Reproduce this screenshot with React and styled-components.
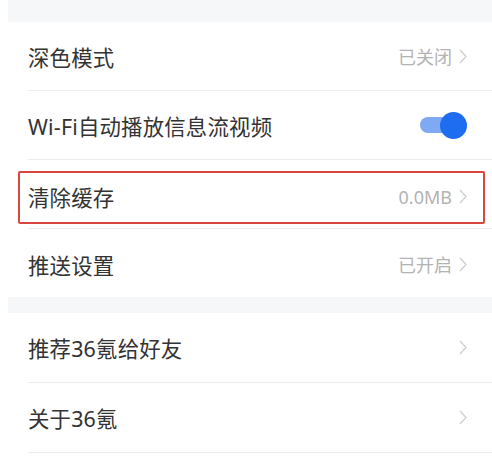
import React from 'react';
import styled, { createGlobalStyle } from 'styled-components';

const GlobalStyle = createGlobalStyle`
  html, body {
    margin: 0;
    padding: 0;
    background: #fff;
  }
  body {
    font-family: "Noto Sans", "Noto Sans CJK SC", sans-serif;
    -webkit-font-smoothing: antialiased;
  }
`;

const Page = styled.div`
  width: 492px;
  height: 456px;
  overflow: hidden;
  background: #fff;
`;

const Gap = styled.div`
  height: ${(p) => p.h}px;
  margin-left: 8px;
  background: #f6f7f8;
`;

const Section = styled.div`
  background: #fff;
`;

const Row = styled.div`
  position: relative;
  display: flex;
  align-items: center;
  justify-content: space-between;
  height: ${(p) => p.h || 68}px;
  margin-left: 28px;
  padding-right: 25px;
  border-bottom: ${(p) => (p.last ? 'none' : '1px solid #ececec')};
`;

const Label = styled.span`
  font-size: 21.4px;
  color: #333;
  letter-spacing: 0.2px;
  margin-top: ${(p) => p.offset || 0}px;
`;

const Right = styled.div`
  display: flex;
  align-items: center;
  gap: 7px;
  margin-top: ${(p) => p.offset || 0}px;
`;

const Value = styled.span`
  font-size: 18px;
  color: #b3b3b3;
`;

const Chevron = () => (
  <svg width="8" height="15" viewBox="0 0 8 15">
    <path d="M1 1 L7 7.5 L1 14" fill="none" stroke="#cfcfcf" strokeWidth="1.3" />
  </svg>
);

const Track = styled.div`
  position: relative;
  width: 40px;
  height: 16px;
  border-radius: 8px;
  background: #80a9f4;
  margin-right: 7px;
`;

const Knob = styled.div`
  position: absolute;
  right: -7px;
  top: 50%;
  width: 27px;
  height: 27px;
  margin-top: -13.5px;
  border-radius: 50%;
  background: #1e6cf0;
`;

const Highlight = styled.div`
  position: absolute;
  left: -10px;
  right: 7px;
  top: 11px;
  bottom: 4px;
  border: 2px solid #d9453f;
  border-radius: 2px;
  pointer-events: none;
`;

const Toggle = () => (
  <Track>
    <Knob />
  </Track>
);

export default function App() {
  return (
    <Page>
      <GlobalStyle />
      <Gap h={22} />
      <Section>
        <Row>
          <Label>深色模式</Label>
          <Right>
            <Value>已关闭</Value>
            <Chevron />
          </Right>
        </Row>
        <Row>
          <Label>Wi-Fi自动播放信息流视频</Label>
          <Right>
            <Toggle />
          </Right>
        </Row>
        <Row>
          <Highlight />
          <Label offset={5}>清除缓存</Label>
          <Right offset={5}>
            <Value>0.0MB</Value>
            <Chevron />
          </Right>
        </Row>
        <Row last>
          <Label offset={2}>推送设置</Label>
          <Right offset={2}>
            <Value>已开启</Value>
            <Chevron />
          </Right>
        </Row>
      </Section>
      <Gap h={16} />
      <Section>
        <Row h={69}>
          <Label>推荐36氪给好友</Label>
          <Right>
            <Chevron />
          </Right>
        </Row>
        <Row h={69}>
          <Label>关于36氪</Label>
          <Right>
            <Chevron />
          </Right>
        </Row>
      </Section>
    </Page>
  );
}
